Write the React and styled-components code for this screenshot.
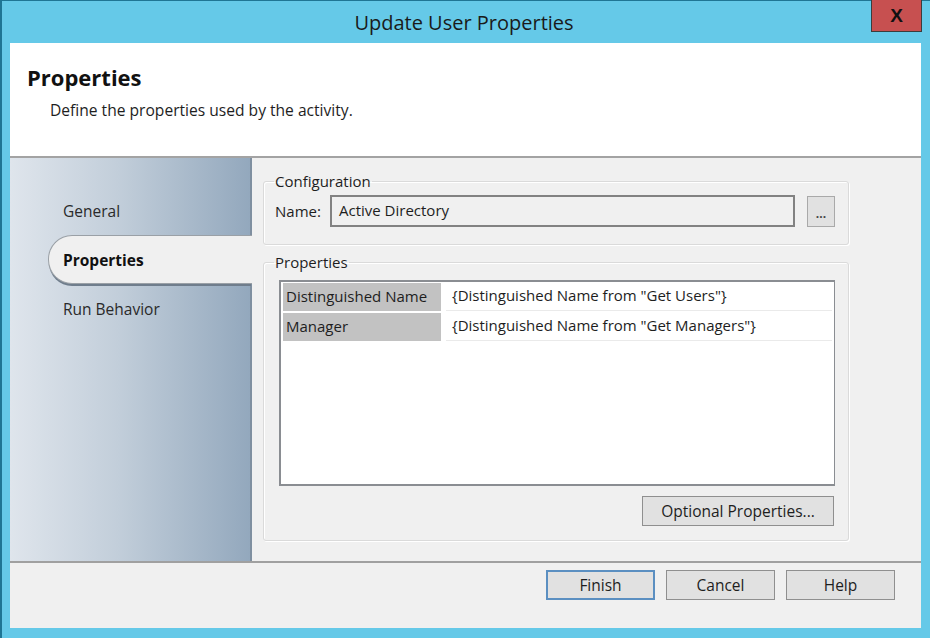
import React from "react";
import styled, { createGlobalStyle } from "styled-components";

const Global = createGlobalStyle`
  html, body { margin: 0; padding: 0; }
  body { font-family: "Open Sans", "Noto Sans", Arial, sans-serif; color: #1e1e1e; }
  * { box-sizing: border-box; }
`;

const Window = styled.div`
  width: 930px;
  height: 638px;
  background: #65c9e8;
  border-left: 2px solid #1f7594;
  border-top: 1px solid #1f7594;
  display: flex;
  flex-direction: column;
`;

const TitleBar = styled.div`
  height: 42px;
  display: grid;
  grid-template-columns: 1fr auto 1fr;
  align-items: start;
`;

const Title = styled.div`
  grid-column: 2;
  font-size: 20px;
  line-height: 43px;
  color: #1a1a1a;
  margin-left: -4px;
`;

const CloseButton = styled.div`
  grid-column: 3;
  justify-self: end;
  margin-right: 8px;
  margin-top: -1px;
  width: 51px;
  height: 32px;
  background: #c75050;
  border: 1px solid #3c3c3c;
  border-top: none;
  display: flex;
  align-items: center;
  justify-content: center;
  font-family: "Liberation Sans", Arial, sans-serif;
  font-weight: 700;
  font-size: 19px;
  color: #111;
`;

const Client = styled.div`
  flex: 1;
  margin: 0 9px 10px 8px;
  display: flex;
  flex-direction: column;
  background: #f0f0f0;
`;

const Header = styled.div`
  height: 115px;
  background: #fff;
  border-bottom: 2px solid #a3a3a3;
  padding: 18px 17px 0;
`;

const Heading = styled.div`
  font-size: 22px;
  font-weight: 700;
  line-height: 32px;
  color: #111;
`;

const Subtitle = styled.div`
  font-size: 15.6px;
  line-height: 20px;
  margin: 7px 0 0 23px;
  color: #1e1e1e;
`;

const Main = styled.div`
  height: 405px;
  display: flex;
  border-bottom: 2px solid #a0a0a0;
`;

const Nav = styled.div`
  width: 242px;
  flex-shrink: 0;
  background: linear-gradient(to right, #dfe5ec 0%, #c2ceda 45%, #93a8bd 100%);
  border-right: 2px solid #7f8fa0;
  padding: 28px 0 0 38px;
  display: flex;
  flex-direction: column;
`;

const NavItem = styled.div`
  height: 49px;
  display: flex;
  align-items: center;
  padding-left: 14px;
  font-size: 15.5px;
  color: ${(p) => (p.$active ? "#111" : "#2a2a2a")};
  font-weight: ${(p) => (p.$active ? 700 : 400)};
  margin-right: ${(p) => (p.$active ? "-2px" : "0")};
  background: ${(p) => (p.$active ? "#f0f0f0" : "transparent")};
  border: ${(p) => (p.$active ? "1px solid #9aa0a6" : "1px solid transparent")};
  border-right: none;
  border-radius: ${(p) => (p.$active ? "24px 0 0 24px" : "0")};
  box-shadow: ${(p) => (p.$active ? "0 3px 0 -1px #6f7d8c" : "none")};
  position: relative;
  z-index: 1;
`;

const Content = styled.div`
  flex: 1;
  background: #f0f0f0;
  padding: 13px 72px 0 11px;
  display: flex;
  flex-direction: column;
  gap: 7px;
`;

const Group = styled.fieldset`
  margin: 0;
  padding: 0 13px ${(p) => p.$pb}px 11px;
  border: 1px solid #dadada;
  border-radius: 3px;
  box-shadow: inset 1px 1px 0 #ffffff, 1px 1px 0 #ffffff;
  display: flex;
  flex-direction: column;
  min-width: 0;
`;

const Legend = styled.legend`
  padding: 0 1px;
  margin-left: -1px;
  font-size: 15px;
  line-height: 20px;
  color: #1e1e1e;
`;

const NameRow = styled.div`
  display: flex;
  align-items: center;
  gap: 12px;
  margin-top: 4px;
`;

const Label = styled.div`
  font-size: 15px;
  width: 43px;
  color: #1e1e1e;
`;

const TextField = styled.div`
  width: 465px;
  height: 32px;
  border: 2px solid #828282;
  background: #f0f0f0;
  padding: 0 7px 3px;
  display: flex;
  align-items: center;
  font-size: 15px;
  color: #1e1e1e;
`;

const SmallButton = styled.div`
  width: 28px;
  height: 31px;
  background: #e1e1e1;
  border: 1px solid #a9a9a9;
  display: flex;
  align-items: center;
  justify-content: center;
  font-size: 12px;
  font-weight: 700;
  padding-top: 5px;
  color: #444;
`;

const List = styled.div`
  height: 206px;
  margin-top: 8px;
  margin-left: 4px;
  background: #fff;
  border: 2px solid #8a8d92;
  border-right-width: 1px;
  padding: 1px 2px;
  display: flex;
  flex-direction: column;
  gap: 2px;
`;

const Row = styled.div`
  display: flex;
  height: 28px;
`;

const NameCell = styled.div`
  width: 158px;
  background: #c2c2c2;
  padding: 0 0 3px 3px;
  display: flex;
  align-items: center;
  font-size: 15px;
  color: #1e1e1e;
`;

const ValueCell = styled.div`
  flex: 1;
  margin-left: 5px;
  border-bottom: 1px solid #eaeaea;
  padding: 0 0 3px 6px;
  display: flex;
  align-items: center;
  font-size: 15px;
  color: #1e1e1e;
`;

const ButtonRow = styled.div`
  display: flex;
  justify-content: flex-end;
  gap: 11px;
  margin-top: ${(p) => p.$mt || 0}px;
  padding-right: ${(p) => p.$pr || 0}px;
`;

const Button = styled.div`
  width: ${(p) => p.$w || 109}px;
  height: 30px;
  background: #e1e1e1;
  border: ${(p) => (p.$default ? "2px solid #5b8fc1" : "1px solid #8f8f8f")};
  display: flex;
  align-items: center;
  justify-content: center;
  font-size: 15.5px;
  color: #1e1e1e;
`;

const Footer = styled.div`
  flex: 1;
  padding: 7px 0 0;
`;

export default function App() {
  return (
    <>
      <Global />
      <Window>
        <TitleBar>
          <Title>Update User Properties</Title>
          <CloseButton>X</CloseButton>
        </TitleBar>
        <Client>
          <Header>
            <Heading>Properties</Heading>
            <Subtitle>Define the properties used by the activity.</Subtitle>
          </Header>
          <Main>
            <Nav>
              <NavItem>General</NavItem>
              <NavItem $active>Properties</NavItem>
              <NavItem>Run Behavior</NavItem>
            </Nav>
            <Content>
              <Group $pb={17}>
                <Legend>Configuration</Legend>
                <NameRow>
                  <Label>Name:</Label>
                  <TextField>Active Directory</TextField>
                  <SmallButton>...</SmallButton>
                </NameRow>
              </Group>
              <Group $pb={14}>
                <Legend>Properties</Legend>
                <List>
                  <Row>
                    <NameCell>Distinguished Name</NameCell>
                    <ValueCell>{'{Distinguished Name from "Get Users"}'}</ValueCell>
                  </Row>
                  <Row>
                    <NameCell>Manager</NameCell>
                    <ValueCell>{'{Distinguished Name from "Get Managers"}'}</ValueCell>
                  </Row>
                </List>
                <ButtonRow $mt={10} $pr={1}>
                  <Button $w={192}>Optional Properties...</Button>
                </ButtonRow>
              </Group>
            </Content>
          </Main>
          <Footer>
            <ButtonRow $pr={26}>
              <Button $default>Finish</Button>
              <Button>Cancel</Button>
              <Button>Help</Button>
            </ButtonRow>
          </Footer>
        </Client>
      </Window>
    </>
  );
}
